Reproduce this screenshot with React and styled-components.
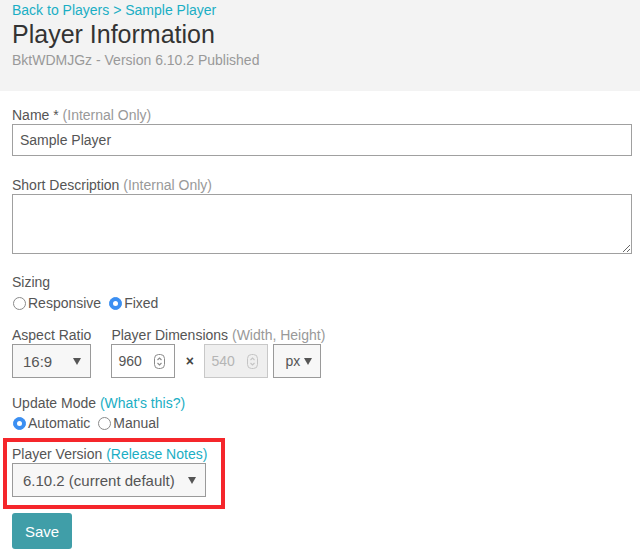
import styled, { createGlobalStyle } from 'styled-components';

const GlobalStyle = createGlobalStyle`
  html, body {
    margin: 0;
    padding: 0;
    background: #fff;
  }
  body {
    font-family: "Liberation Sans", Arial, sans-serif;
    font-size: 14px;
    color: #555;
  }
`;

const Header = styled.header`
  background: #f3f3f3;
  padding: 2px 12px 22px;
`;

const Crumbs = styled.div`
  line-height: 17px;
  color: #1aaec4;
`;

const Title = styled.h1`
  margin: 0 0 3px;
  font-size: 25px;
  font-weight: normal;
  line-height: 30px;
  color: #333;
`;

const SubTitle = styled.div`
  line-height: 17px;
  color: #999;
`;

const Form = styled.form`
  padding: 16px 8px 0 12px;
`;

const Group = styled.div`
  margin-bottom: ${p => p.$mb ?? 20}px;
`;

const Label = styled.label`
  display: block;
  line-height: 17px;
  white-space: nowrap;
  color: #555;
`;

const Hint = styled.span`
  color: #999;
`;

const Link = styled.a`
  color: #1aaec4;
  text-decoration: none;
`;

const TextInput = styled.input`
  display: block;
  box-sizing: border-box;
  width: 100%;
  height: 32px;
  margin: 0;
  padding: 0 7px;
  border: 1px solid #a0a0a0;
  border-radius: 0;
  font: 14px "Liberation Sans", Arial, sans-serif;
  color: #555;
  outline: none;
`;

const TextArea = styled.textarea`
  display: block;
  box-sizing: border-box;
  width: 100%;
  height: 60px;
  margin: 0;
  padding: 6px 7px;
  border: 1px solid #a0a0a0;
  border-radius: 0;
  font: 14px "Liberation Sans", Arial, sans-serif;
  outline: none;
`;

const RadioRow = styled.div`
  display: flex;
  align-items: center;
  gap: 7px;
  margin-top: ${p => p.$mt ?? 4}px;
  line-height: 17px;
`;

const RadioOption = styled.label`
  display: flex;
  align-items: center;
  gap: 2px;
  color: #555;
`;

const RadioDot = styled.span`
  box-sizing: border-box;
  width: 13px;
  height: 13px;
  margin-left: 1px;
  border-radius: 50%;
  border: 1px solid ${p => (p.$checked ? '#3b8ff2' : '#8a8a8a')};
  background: ${p => (p.$checked ? '#3b8ff2' : '#fff')};
  display: flex;
  align-items: center;
  justify-content: center;

  &::after {
    content: '';
    width: 5px;
    height: 5px;
    border-radius: 50%;
    background: #fff;
    display: ${p => (p.$checked ? 'block' : 'none')};
  }
`;

const DimRow = styled.div`
  display: flex;
  gap: 20px;
  margin-bottom: 17px;
`;

const Controls = styled.div`
  display: flex;
  align-items: center;
`;

const SelectBox = styled.div`
  box-sizing: border-box;
  display: flex;
  align-items: center;
  justify-content: space-between;
  width: ${p => p.$w}px;
  height: 34px;
  padding: 0 ${p => p.$pr ?? 9}px 0 ${p => p.$pl ?? 10}px;
  border: 1px solid #9a9a9a;
  background: #f7f7f7;
  font-size: ${p => p.$fs ?? 15}px;
  color: #555;
`;

const NumberBox = styled.div`
  box-sizing: border-box;
  display: flex;
  align-items: center;
  width: 64px;
  height: 34px;
  padding: 0 9px 0 6px;
  border: 1px solid ${p => (p.$disabled ? '#c8c8c8' : '#9a9a9a')};
  background: ${p => (p.$disabled ? '#efefef' : '#fff')};
`;

const NumberField = styled.input`
  flex: 1;
  min-width: 0;
  border: 0;
  padding: 0;
  margin: 0;
  background: transparent;
  font: 14px "Liberation Sans", Arial, sans-serif;
  color: ${p => (p.disabled ? '#b5b5b5' : '#555')};
  outline: none;
`;

const Times = styled.span`
  width: 29px;
  text-align: center;
  font-size: 14px;
  font-weight: bold;
  color: #444;
`;

const Unit = styled.div`
  margin-left: 5px;
`;

const Highlight = styled.div`
  width: 222px;
  box-sizing: border-box;
  margin: 6px 0 4px -9px;
  padding: 4px 15px 8px 5px;
  border: 4px solid #f5262b;
`;

const SaveButton = styled.button`
  width: 60px;
  height: 36px;
  border: 0;
  border-radius: 3px;
  background: #409ea8;
  color: #fff;
  font: 15px "Liberation Sans", Arial, sans-serif;
  padding: 0;
`;

function Caret() {
  return (
    <svg width="8" height="7" viewBox="0 0 8 7">
      <polygon points="0,0 8,0 4,7" fill="#555" />
    </svg>
  );
}

function Spinner({ faded }) {
  const c = faded ? '#c4c4c4' : '#8a8a8a';
  return (
    <svg width="11" height="15" viewBox="0 0 11 15">
      <rect x="0.5" y="0.5" width="10" height="14" rx="4" fill="none" stroke={c} />
      <polyline points="3.5,6 5.5,4 7.5,6" fill="none" stroke={c} strokeWidth="1.1" />
      <polyline points="3.5,9 5.5,11 7.5,9" fill="none" stroke={c} strokeWidth="1.1" />
    </svg>
  );
}

function Radio({ checked, children }) {
  return (
    <RadioOption>
      <RadioDot $checked={checked} />
      {children}
    </RadioOption>
  );
}

export default function App() {
  return (
    <>
      <GlobalStyle />
      <Header>
        <Crumbs>Back to Players &gt; Sample Player</Crumbs>
        <Title>Player Information</Title>
        <SubTitle>BktWDMJGz - Version 6.10.2 Published</SubTitle>
      </Header>

      <Form onSubmit={e => e.preventDefault()}>
        <Group $mb={21}>
          <Label>Name * <Hint>(Internal Only)</Hint></Label>
          <TextInput defaultValue="Sample Player" />
        </Group>

        <Group $mb={20}>
          <Label>Short Description <Hint>(Internal Only)</Hint></Label>
          <TextArea />
        </Group>

        <Group $mb={15}>
          <Label>Sizing</Label>
          <RadioRow>
            <Radio>Responsive</Radio>
            <Radio checked>Fixed</Radio>
          </RadioRow>
        </Group>

        <DimRow>
          <div>
            <Label>Aspect Ratio</Label>
            <SelectBox $w={79}>
              <span>16:9</span>
              <Caret />
            </SelectBox>
          </div>
          <div>
            <Label>Player Dimensions <Hint>(Width, Height)</Hint></Label>
            <Controls>
              <NumberBox>
                <NumberField defaultValue="960" />
                <Spinner />
              </NumberBox>
              <Times>×</Times>
              <NumberBox $disabled>
                <NumberField defaultValue="540" disabled />
                <Spinner faded />
              </NumberBox>
              <Unit>
                <SelectBox $w={48} $pl={11} $pr={8} $fs={14}>
                  <span>px</span>
                  <Caret />
                </SelectBox>
              </Unit>
            </Controls>
          </div>
        </DimRow>

        <Group $mb={0}>
          <Label>Update Mode <Link href="#">(What's this?)</Link></Label>
          <RadioRow $mt={3}>
            <Radio checked>Automatic</Radio>
            <Radio>Manual</Radio>
          </RadioRow>
        </Group>

        <Highlight>
          <Label>Player Version <Link href="#">(Release Notes)</Link></Label>
          <SelectBox $w={194}>
            <span>6.10.2 (current default)</span>
            <Caret />
          </SelectBox>
        </Highlight>

        <SaveButton type="submit">Save</SaveButton>
      </Form>
    </>
  );
}
